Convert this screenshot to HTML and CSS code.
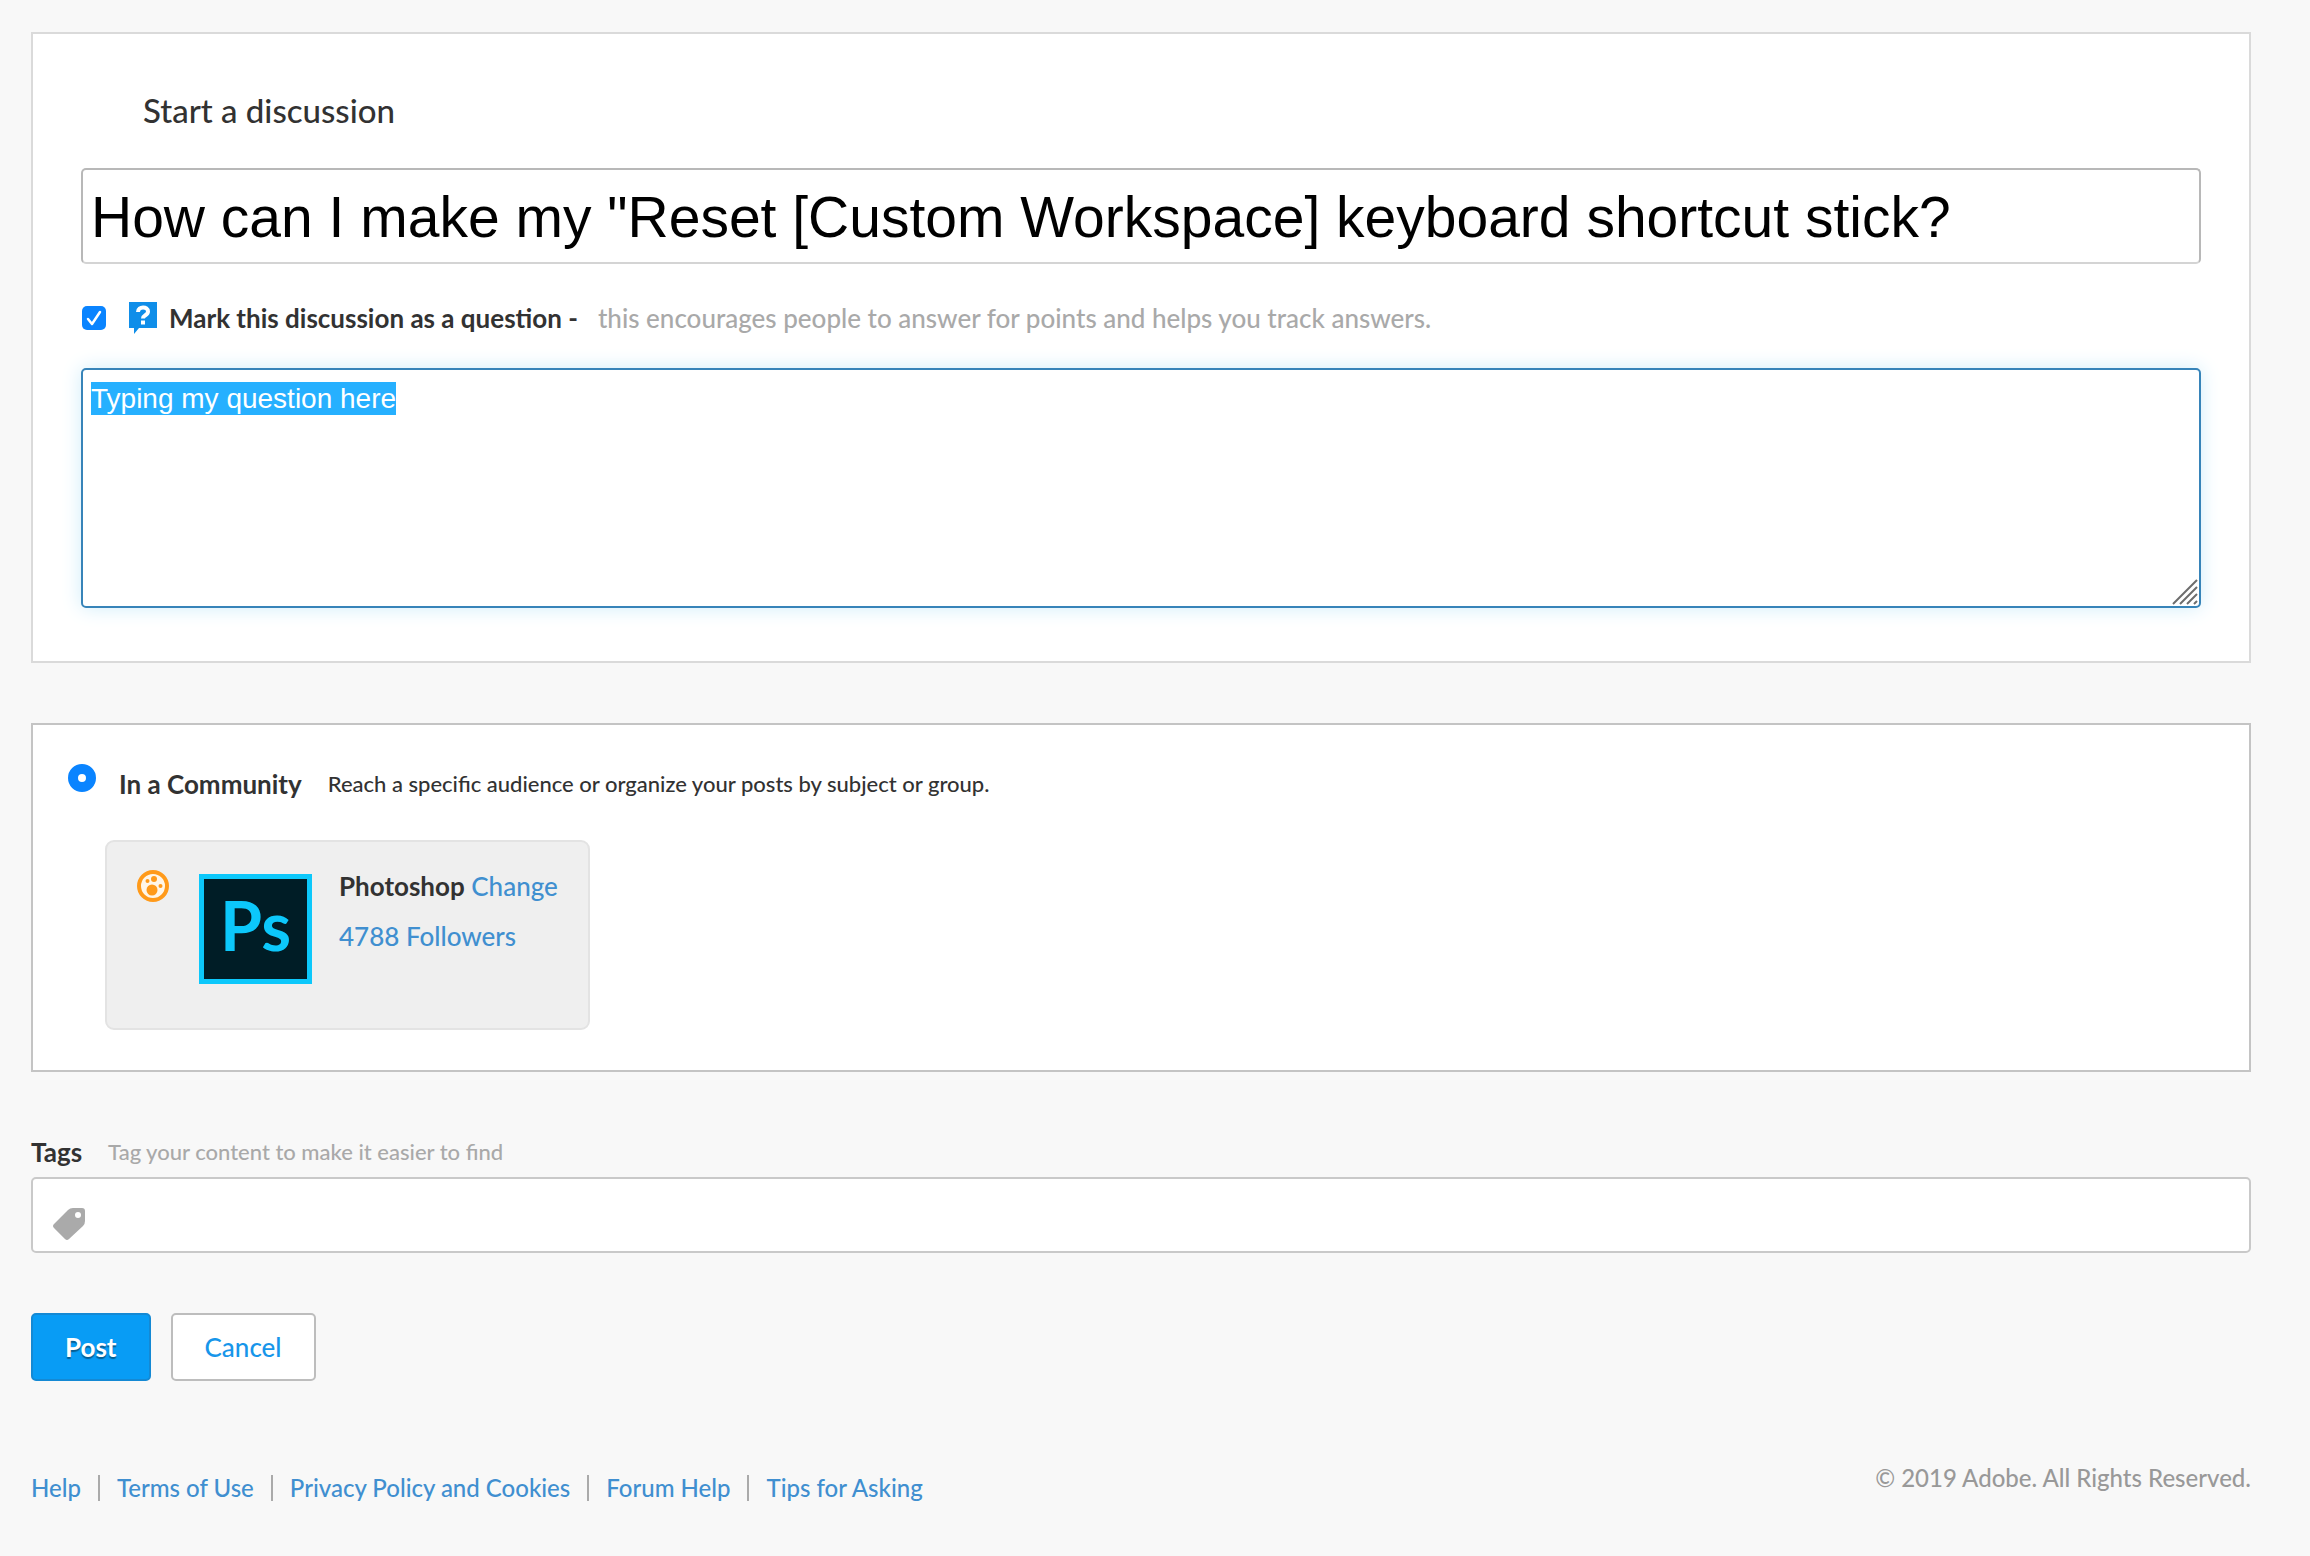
FILE: index.html
```html
<!DOCTYPE html>
<html lang="en">
<head>
  <meta charset="UTF-8">
  <meta name="viewport" content="width=device-width, initial-scale=1.0">
  <title>Start a discussion</title>
  <link rel="stylesheet" href="styles.css">
</head>
<body>

  <form class="post-form">
    <section class="panel">
      <h1 class="panel-title"><label for="subject">Start a discussion</label></h1>
      <input class="subject" id="subject" type="text" value="How can I make my &quot;Reset [Custom Workspace] keyboard shortcut stick?">

      <div class="question-row">
        <input class="checkbox" id="mark-question" type="checkbox" checked>
        <svg class="question-icon" viewBox="0 0 28 32" aria-hidden="true">
          <path fill="#0f8ee9" d="M0 0h28v26H10l-5 6v-6H0z"/>
          <path fill="none" stroke="#fff" stroke-width="4" d="M9 10c0-6 10-6 10-.5 0 4-5 3.500-5 7"/>
          <path fill="#fff" d="M12 18.500h4v4h-4z"/>
        </svg>
        <label class="strong" for="mark-question">Mark this discussion as a question -</label>
        <span class="muted">this encourages people to answer for points and helps you track answers.</span>
      </div>

      <div class="editor">
        <textarea class="message" id="message" aria-label="Message" spellcheck="false">Typing my question here</textarea>
        <svg class="grip" viewBox="0 0 26 26" aria-hidden="true">
          <path fill="none" stroke="#6d6d6d" stroke-width="2" d="M1 25L25 1M8 25L25 8M15 25L25 15M22 25l3-3"/>
        </svg>
      </div>
    </section>

    <section class="panel panel-community">
      <div class="community-row">
        <input class="radio" id="in-community" type="radio" name="place" checked>
        <label class="strong" for="in-community">In a Community</label>
        <span class="description">Reach a specific audience or organize your posts by subject or group.</span>
      </div>

      <div class="community-card">
        <svg class="community-icon" viewBox="0 0 32 32" aria-hidden="true">
          <circle cx="16" cy="16" r="14" fill="#fff6e8" stroke="#ff9a1a" stroke-width="4"/>
          <g fill="#ff9a1a">
            <circle cx="15" cy="20" r="5.500"/>
            <circle cx="17" cy="9" r="3"/>
            <circle cx="10.500" cy="11" r="2"/>
            <circle cx="23.500" cy="16" r="2"/>
          </g>
        </svg>
        <div class="app-logo">Ps</div>
        <div class="community-info">
          <div><span class="strong">Photoshop</span> <a href="#">Change</a></div>
          <div><a href="#">4788 Followers</a></div>
        </div>
      </div>
    </section>

    <div class="tags-head">
      <label class="strong" for="tags">Tags</label>
      <span class="hint">Tag your content to make it easier to find</span>
    </div>
    <div class="tags-box">
      <svg class="tag-icon" viewBox="0 0 32 32" aria-hidden="true">
        <path fill="#aaa" fill-rule="evenodd" d="M20 0h9q3 0 3 3v10q0 3-2 5L16 31q-2 2-4 0L1 20q-2-2 0-4L15 2q2-2 5-2zM25 4a3 3 0 1 0 0 6 3 3 0 0 0 0-6z"/>
      </svg>
      <input class="tags-input" id="tags" type="text">
    </div>

    <div class="actions">
      <button class="btn btn-primary" type="submit">Post</button>
      <button class="btn" type="button">Cancel</button>
    </div>
  </form>

  <footer class="footer">
    <nav class="footer-links">
      <a href="#">Help</a>
      <a href="#">Terms of Use</a>
      <a href="#">Privacy Policy and Cookies</a>
      <a href="#">Forum Help</a>
      <a href="#">Tips for Asking</a>
    </nav>
    <div class="copyright">© 2019 Adobe. All Rights Reserved.</div>
  </footer>

  <script>
    const message = document.getElementById('message');
    message.focus();
    message.select();
  </script>

</body>
</html>
```
FILE: styles.css
```css
* {
  box-sizing: border-box;
}

body {
  margin: 0;
  padding: 32px 59px 32px 31px;
  background-color: #f8f8f8;
  color: #323232;
  font-family: Lato, "Open Sans", sans-serif;
  font-size: 26px;
  font-weight: 500;
  line-height: 32px;
}

a {
  color: #408fd0;
  text-decoration: none;
}

.strong {
  font-weight: bold;
}

.panel {
  padding: 54px 48px 53px;
  background-color: #fff;
  border: 2px solid #dadada;
}

.panel-title {
  margin: 0 0 36px;
  padding-left: 62px;
  font-size: 33px;
  font-weight: inherit;
  line-height: 44px;
}

.subject {
  display: block;
  width: 100%;
  height: 96px;
  padding: 2px 8px 0;
  border: 2px solid #b8b8b8;
  border-bottom-color: #d4d4d4;
  border-radius: 5px;
  color: #000;
  font-family: "Liberation Sans", Arial, sans-serif;
  font-size: 57px;
}

.question-row {
  display: flex;
  align-items: center;
  margin: 38px 0 34px;
}

.checkbox {
  appearance: none;
  width: 24px;
  height: 24px;
  margin: 0 23px 0 1px;
  border-radius: 5px;
  background: #0a84ff url("data:image/svg+xml,%3Csvg xmlns='http://www.w3.org/2000/svg' viewBox='0 0 24 24'%3E%3Cpath d='M6 13l4 5 8-12' fill='none' stroke='white' stroke-width='2.500' stroke-linecap='round' stroke-linejoin='round'/%3E%3C/svg%3E");
}

.question-icon {
  width: 28px;
  height: 32px;
  margin-right: 12px;
}

.muted {
  margin-left: 20px;
  color: #a9a9a9;
}

.editor {
  position: relative;
}

.message {
  display: block;
  width: 100%;
  height: 240px;
  padding: 12px 8px;
  border: 2px solid #3784b9;
  border-radius: 5px;
  outline: none;
  box-shadow: 0 0 20px #d0edfa;
  resize: none;
  color: #333;
  font-family: "Liberation Sans", Arial, sans-serif;
  font-size: 28px;
  line-height: 33px;
}

.message::selection {
  background-color: #26b0ff;
  color: #fff;
}

.grip {
  position: absolute;
  right: 3px;
  bottom: 3px;
  width: 26px;
  height: 26px;
}

.panel-community {
  margin-top: 60px;
  padding: 39px 35px 40px;
  border-color: #c4c4c4;
}

.community-row {
  display: flex;
  align-items: center;
  height: 40px;
}

.radio {
  appearance: none;
  align-self: flex-start;
  width: 28px;
  height: 28px;
  margin: 0 23px 0 0;
  border: 10px solid #0a84ff;
  border-radius: 50%;
  background-color: #fff;
}

.description {
  margin-left: 26px;
  font-size: 22px;
}

.community-card {
  display: inline-flex;
  height: 190px;
  margin: 36px 0 0 37px;
  padding: 28px 30px;
  vertical-align: top;
  background-color: #efefef;
  border: 2px solid #e3e3e3;
  border-radius: 9px;
}

.community-icon {
  width: 32px;
  height: 32px;
}

.app-logo {
  width: 113px;
  height: 110px;
  margin: 4px 27px 0 30px;
  background-color: #001d26;
  border: 5px solid #0cc8fb;
  color: #0cc8fb;
  font-size: 68px;
  font-weight: bold;
  line-height: 92px;
  text-align: center;
}

.community-info {
  display: grid;
  align-content: start;
  gap: 18px;
}

.tags-head {
  display: flex;
  align-items: center;
  gap: 26px;
  margin: 64px 0 9px;
}

.hint {
  color: #a9a9a9;
  font-size: 22px;
}

.tags-box {
  display: flex;
  height: 76px;
  background-color: #fff;
  border: 2px solid #c9c9c9;
  border-radius: 5px;
}

.tag-icon {
  width: 32px;
  height: 32px;
  margin: 29px 12px 0 20px;
}

.tags-input {
  flex: 1;
  border: none;
  outline: none;
  background: none;
  font: inherit;
}

.actions {
  display: flex;
  gap: 20px;
  margin-top: 60px;
}

.btn {
  height: 68px;
  padding: 0 32px;
  background-color: #fff;
  border: 2px solid #bdbdbd;
  border-radius: 5px;
  color: #1796ea;
  font: inherit;
}

.btn-primary {
  background-color: #089cf5;
  border-color: #1489d4;
  color: #fff;
  font-weight: bold;
  text-shadow: 0 2px 1px rgba(0, 0, 0, 0.4);
}

.footer {
  display: flex;
  justify-content: space-between;
  margin-top: 81px;
  font-size: 24px;
}

.footer-links {
  display: flex;
  align-items: center;
  padding-top: 13px;
}

.footer-links a {
  line-height: 26px;
}

.footer-links a + a {
  margin-left: 17px;
  padding-left: 17px;
  border-left: 2px solid #aaa;
}

.copyright {
  color: #999;
}
```
